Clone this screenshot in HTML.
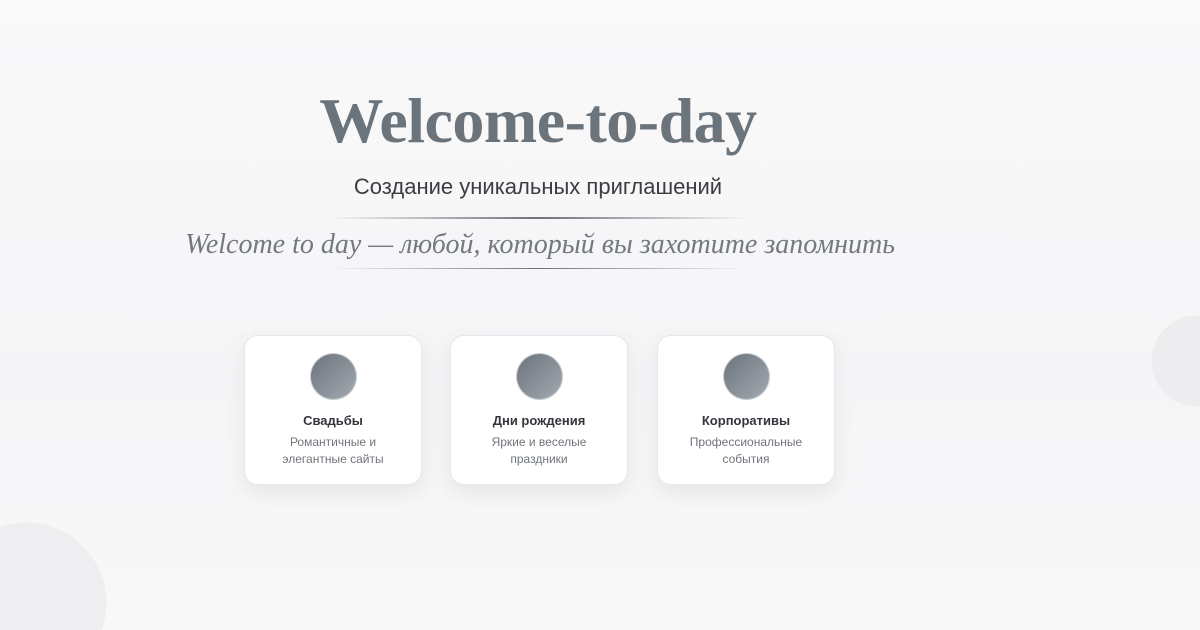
<!DOCTYPE html>
<html><head><meta charset="utf-8"><style>
html,body{margin:0;padding:0;width:1200px;height:630px;overflow:hidden}
.wrap{position:relative;width:1200px;height:630px;overflow:hidden;font-family:"Liberation Sans",sans-serif;
background:
radial-gradient(circle 81px at 26px 603px,#eeeef0 80px,rgba(238,238,240,0) 81px),
radial-gradient(circle 46px at 1197px 361px,#ededef 45px,rgba(237,237,239,0) 46px),
linear-gradient(180deg,#f9f9fa 0%,#f5f5f7 60%,#f8f8f9 100%)}
h1{position:absolute;left:0;width:1076px;top:84px;margin:0;text-align:center;font-family:"Liberation Serif",serif;font-weight:bold;font-size:64px;color:#6b737b;letter-spacing:-0.5px}
.sub{position:absolute;left:0;width:1076px;top:174px;text-align:center;font-size:22px;color:#3a3d42}
.line{position:absolute;left:328px;width:420px;height:2px;background:linear-gradient(90deg,rgba(110,116,124,0),#6d737b 50%,rgba(110,116,124,0))}
.tag{position:absolute;left:0;width:1080px;top:229px;text-align:center;font-family:"Liberation Serif",serif;font-style:italic;font-size:28px;color:#737980}
.card{position:absolute;top:335px;width:176px;height:148px;background:#fff;border:1px solid #e6e7ea;border-radius:14px;box-shadow:0 8px 22px rgba(0,0,0,0.07);text-align:center}
.ic{width:45px;height:45px;border-radius:50%;margin:18px auto 0;background:linear-gradient(135deg,#6b737c,#a3a9b0);box-shadow:0 0 0 1px #c8cbd0}
.t{margin-top:14px;font-weight:bold;font-size:13px;color:#33363b}
.d{margin-top:6px;font-size:12px;line-height:17px;color:#6f747a}
</style></head><body><div class="wrap">
<h1>Welcome-to-day</h1>
<div class="sub">Создание уникальных приглашений</div>
<div class="line" style="top:217px"></div>
<div class="tag">Welcome to day — любой, который вы захотите запомнить</div>
<div class="line" style="top:268px;height:1px"></div>
<div class="card" style="left:244px"><div class="ic"></div><div class="t">Свадьбы</div><div class="d">Романтичные и<br>элегантные сайты</div></div>
<div class="card" style="left:450px"><div class="ic"></div><div class="t">Дни рождения</div><div class="d">Яркие и веселые<br>праздники</div></div>
<div class="card" style="left:657px"><div class="ic"></div><div class="t">Корпоративы</div><div class="d">Профессиональные<br>события</div></div>
</div></body></html>
